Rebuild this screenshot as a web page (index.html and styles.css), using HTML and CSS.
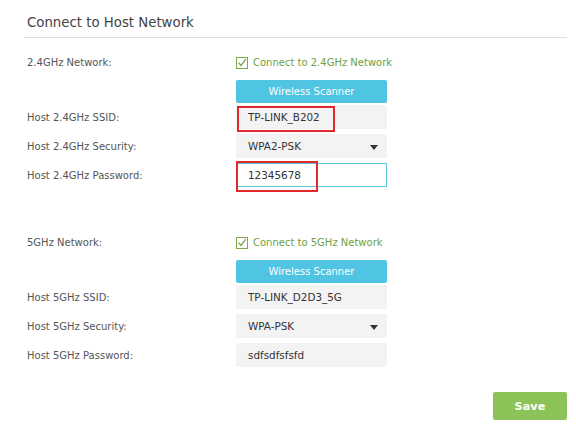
FILE: index.html
```html
<!DOCTYPE html>
<html>
<head>
<meta charset="utf-8">
<link rel="stylesheet" href="styles.css">
</head>
<body>
<div class="page">
  <h1 class="title">Connect to Host Network</h1>

  <div class="section">
    <div class="label">2.4GHz Network:</div>
    <label class="check">
      <svg class="cb" width="12" height="12" viewBox="0 0 12 12"><rect x="0.5" y="0.5" width="11" height="11" fill="#fff" stroke="#7aa84a"/><path d="M2.6 5.8 L5 8.4 L9.8 2.2" fill="none" stroke="#7aa84a" stroke-width="1.3"/></svg>
      <span>Connect to 2.4GHz Network</span>
    </label>
    <div></div>
    <button class="scan">Wireless Scanner</button>
    <div class="label">Host 2.4GHz SSID:</div>
    <div class="field">TP-LINK_B202<span class="mark mark-ssid"></span></div>
    <div class="label">Host 2.4GHz Security:</div>
    <div class="field select">WPA2-PSK<span class="arrow"></span></div>
    <div class="label">Host 2.4GHz Password:</div>
    <div class="field focus">12345678<span class="mark mark-pwd"></span></div>
  </div>

  <div class="section second">
    <div class="label">5GHz Network:</div>
    <label class="check">
      <svg class="cb" width="12" height="12" viewBox="0 0 12 12"><rect x="0.5" y="0.5" width="11" height="11" fill="#fff" stroke="#7aa84a"/><path d="M2.6 5.8 L5 8.4 L9.8 2.2" fill="none" stroke="#7aa84a" stroke-width="1.3"/></svg>
      <span>Connect to 5GHz Network</span>
    </label>
    <div></div>
    <button class="scan">Wireless Scanner</button>
    <div class="label">Host 5GHz SSID:</div>
    <div class="field">TP-LINK_D2D3_5G</div>
    <div class="label">Host 5GHz Security:</div>
    <div class="field select">WPA-PSK<span class="arrow"></span></div>
    <div class="label">Host 5GHz Password:</div>
    <div class="field">sdfsdfsfsfd</div>
  </div>

  <div class="actions">
    <button class="save">Save</button>
  </div>
</div>
</body>
</html>
```

FILE: styles.css
```css
* { box-sizing: border-box; }
html, body { margin: 0; padding: 0; background: #fff; }
body {
  font-family: "DejaVu Sans", Verdana, sans-serif;
  color: #555;
  font-size: 10px;
}
.page {
  padding: 14px 9px 0 24px;
}
.title {
  margin: 0;
  font-weight: normal;
  font-size: 13.3px;
  color: #444;
  padding: 0 0 5px 3px;
  border-bottom: 1px solid #dcdcdc;
  line-height: 18px;
}
.section {
  display: grid;
  grid-template-columns: 212px 151px;
  grid-auto-rows: 24px;
  grid-template-rows: 20px 23px;
  row-gap: 5px;
  margin-top: 14px;
  align-items: center;
}
.section.second { margin-top: 45px; }
.label {
  padding-left: 3px;
  color: #555;
  white-space: nowrap;
}
.check {
  display: flex;
  align-items: center;
  gap: 5px;
  color: #6f9f42;
  padding-top: 1px;
  white-space: nowrap;
}
.cb { display: block; flex: none; }
.scan {
  margin-top: 3px;
  height: 23px;
  align-self: start;
  border: none;
  border-radius: 2px;
  background: #4fc4e3;
  color: #fff;
  font-family: "DejaVu Sans", Verdana, sans-serif;
  font-size: 10px;
  padding: 0;
}
.field {
  position: relative;
  height: 24px;
  background: #f3f3f3;
  border: 1px solid #f3f3f3;
  padding-left: 11px;
  display: flex;
  align-items: center;
  color: #333;
  font-size: 10.4px;
  white-space: nowrap;
}
.field.focus {
  background: #fff;
  border-color: #5cc8df;
}
.arrow {
  position: absolute;
  right: 8px;
  top: 10px;
  width: 0;
  height: 0;
  border-left: 4.5px solid transparent;
  border-right: 4.5px solid transparent;
  border-top: 5px solid #333;
}
.mark {
  position: absolute;
  border: 2px solid #e0282d;
}
.mark-ssid {
  left: 0;
  top: 0;
  width: 98px;
  height: 26px;
}
.mark-pwd {
  left: -1px;
  top: -3px;
  width: 82px;
  height: 31px;
}
.actions {
  display: flex;
  justify-content: flex-end;
  margin-top: 25px;
}
.save {
  width: 74px;
  height: 28px;
  border: none;
  border-radius: 2px;
  background: #8cc358;
  color: #fff;
  font-family: "DejaVu Sans", Verdana, sans-serif;
  font-weight: bold;
  font-size: 11.3px;
  padding: 0;
}
```
